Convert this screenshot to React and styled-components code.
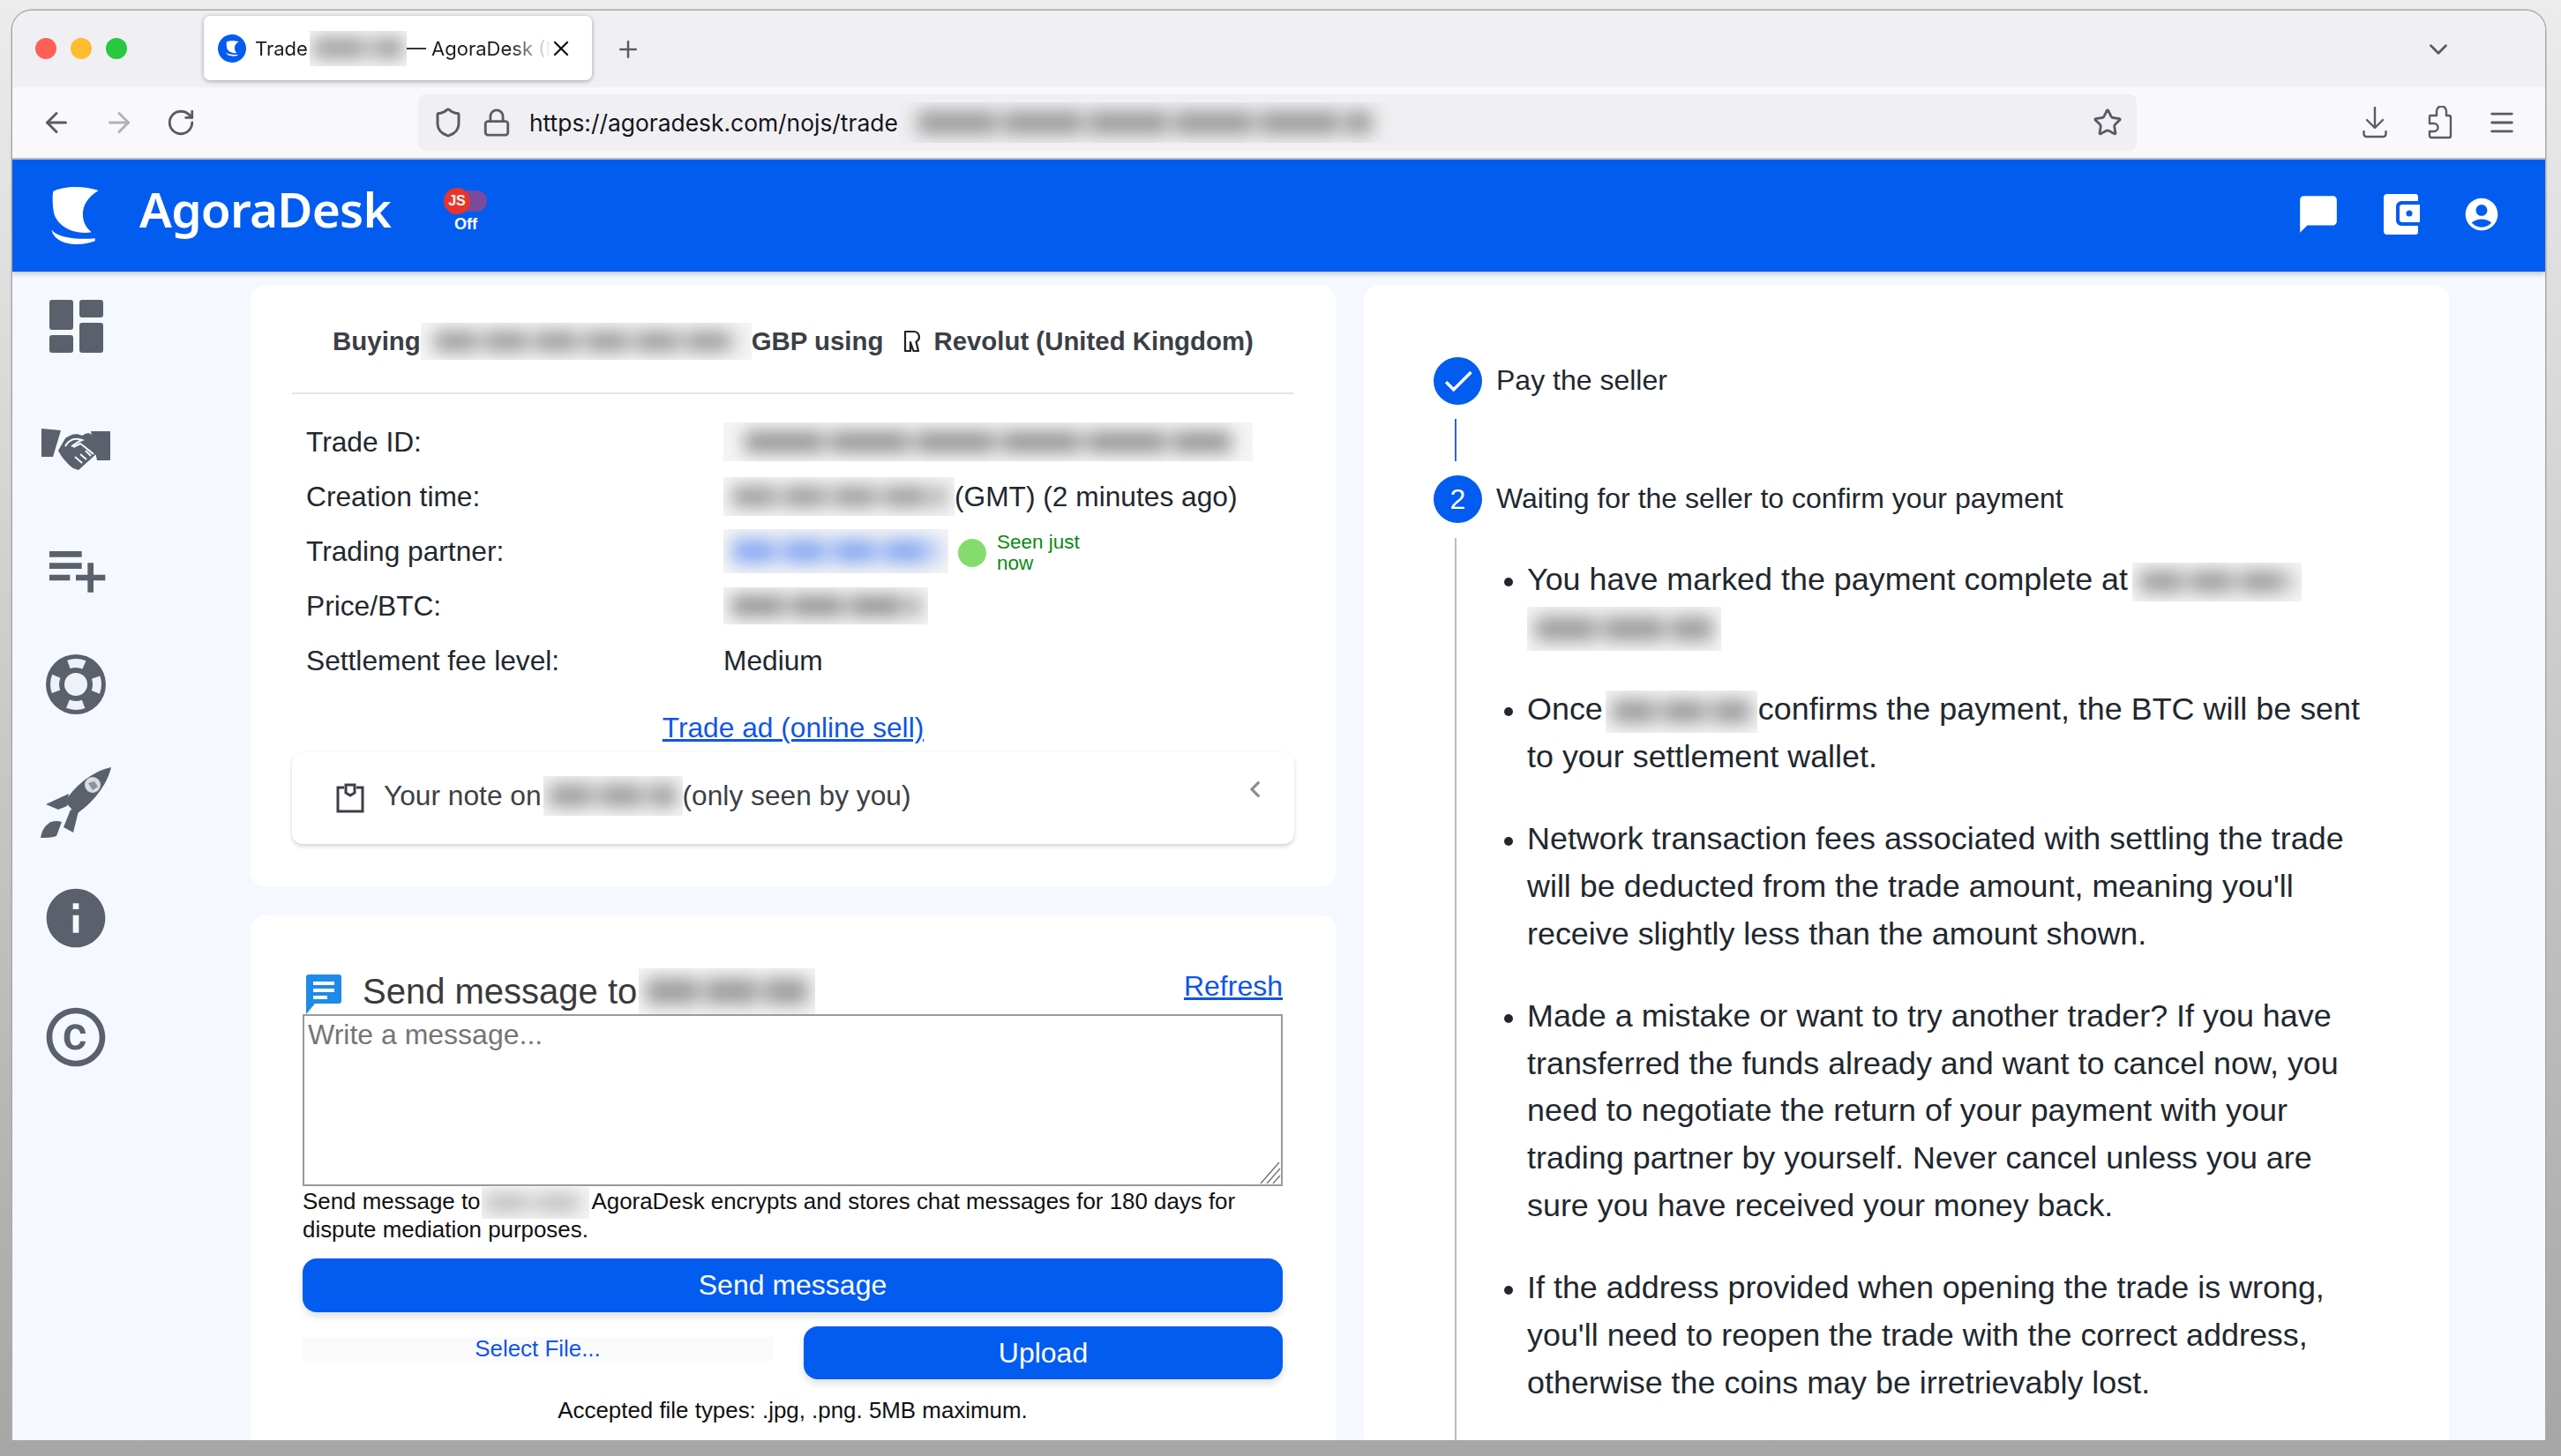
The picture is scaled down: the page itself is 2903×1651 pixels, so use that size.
import React from "react";
import styled, { createGlobalStyle } from "styled-components";
import { ArrowLeft, ArrowRight, RotateCw, Shield, Lock, Star, Menu, ChevronDown, Plus, X } from "lucide-react";
import { MdPlaylistAdd, MdInfo, MdCopyright, MdChatBubble, MdAccountCircle, MdChevronLeft, MdCheck } from "react-icons/md";

const Global = createGlobalStyle`
  html, body { margin: 0; padding: 0; background: #a8a8a8; }
  * { box-sizing: border-box; }
  body { font-family: "Liberation Sans", Arial, sans-serif; }
`;

const Page = styled.div`
  width: 2903px; height: 1651px; overflow: hidden;
  padding: 12px 18px 18px 14px;
  background: linear-gradient(180deg, #ececec 0%, #d0d0d0 40%, #a6a6a6 100%);
`;
const Win = styled.div`
  height: 100%; display: flex; flex-direction: column; overflow: hidden;
  border-radius: 22px 22px 0 0; background: #f5f8ff;
  box-shadow: 0 0 0 1.5px #a9a9a9;
`;
const TabBar = styled.div`
  height: 87px; flex: none; background: #f0f0f4; display: flex; align-items: center;
  padding: 0 0 0 26px;
`;
const Light = styled.span`
  width: 24px; height: 24px; border-radius: 50%; background: ${p => p.$c}; margin-right: 16px; flex: none;
  position: relative; top: -1px;
`;
const Tab = styled.div`
  width: 440px; height: 73px; margin-left: 71px; background: #fff; border-radius: 7px; flex: none;
  box-shadow: 0 1px 5px rgba(0,0,0,.35); display: flex; align-items: center; padding-left: 16px;
  font-family: "Inter", "Liberation Sans", sans-serif; font-size: 22px; color: #1c1b22; position: relative; top: -1px;
`;
const Favicon = styled.span`
  width: 32px; height: 32px; border-radius: 50%; background: #025cf0; display: flex; align-items: center; justify-content: center; flex: none; margin-right: 10px;
`;
const TabTitle = styled.span`
  display: flex; align-items: center; white-space: nowrap; width: 336px;
  -webkit-mask-image: linear-gradient(90deg, #000 86%, transparent 100%);
  mask-image: linear-gradient(90deg, #000 86%, transparent 100%);
`;
const TabClose = styled.span`display: flex; color: #15141a; margin-left: -3px;`;
const NewTab = styled.span`display: flex; color: #5b5b66; margin-left: 26px;`;
const TabMenu = styled.span`display: flex; color: #5b5b66; margin-left: auto; margin-right: 104px;`;

const Toolbar = styled.div`
  height: 82px; flex: none; background: #f9f9fb; border-bottom: 2px solid #c4c4c6; display: flex; align-items: center; color: #5b5b66;
  padding: 0 0 0 32px;
`;
const NavIcon = styled.span`
  display: flex; margin-right: 35px; color: ${p => p.$dim ? "#b1b1b6" : "#5b5b66"};
`;
const UrlBar = styled.div`
  width: 1948px; height: 64px; margin-left: 217px; background: #f0f0f4; border-radius: 8px; display: flex; align-items: center; padding-left: 16px; flex: none;
`;
const LockWrap = styled.span`display: flex; margin-left: 20px;`;
const UrlText = styled.span`
  font-family: "Inter", "Liberation Sans", sans-serif; font-size: 26.4px; color: #15141a; margin-left: 20px; white-space: nowrap; display: flex; align-items: center;
`;
const StarWrap = styled.span`display: flex; margin-left: auto; margin-right: 16px; color: #5b5b66;`;
const ToolRight = styled.div`display: flex; align-items: center; gap: 39px; margin-left: auto; margin-right: 32px;`;
const DownloadWrap = styled.span`display: flex; margin-right: 7px;`;

const Header = styled.header`
  height: 127px; flex: none; background: #025cf0; display: flex; align-items: center; padding-left: 43px; color: #fff;
  box-shadow: 0 2px 6px rgba(0,0,0,.25); position: relative; z-index: 2;
`;
const Brand = styled.span`
  font-family: "Noto Sans", sans-serif; font-weight: 600; font-size: 55px; letter-spacing: -.8px; margin-left: 45px; line-height: 1; position: relative; top: -8px;
`;
const Toggle = styled.div`
  margin-left: 53px; width: 64px; display: flex; flex-direction: column; align-items: center; position: relative; top: -5px;
`;
const Track = styled.div`
  width: 48px; height: 24px; border-radius: 12px; background: #7a4a9c; position: relative;
`;
const Knob = styled.div`
  position: absolute; left: -1px; top: -3px; width: 30px; height: 30px; border-radius: 50%; background: #e8352a; color: #fff; font-size: 16px; font-weight: 700; display: flex; align-items: center; justify-content: center;
`;
const OffLabel = styled.div`font-size: 18px; font-weight: 700; margin-top: 5px; line-height: 18px;`;
const HeadIcons = styled.div`display: flex; align-items: center; margin-left: auto; margin-right: 50px; gap: 48px; position: relative; top: -2px;`;

const Body = styled.div`flex: 1; min-height: 0; display: flex; overflow: hidden;`;
const Side = styled.nav`
  width: 270px; flex: none; display: flex; flex-direction: column; align-items: center; padding: 32px 126px 0 0; color: #5a616c;
`;
const SideSlot = styled.div`height: ${p => p.$h}px; flex: none; display: flex; justify-content: center; align-items: flex-start; width: 90px;`;

const Cols = styled.div`display: flex; padding-top: 16px; gap: 32px; align-items: flex-start;`;
const LeftCol = styled.div`width: 1230px; display: flex; flex-direction: column; gap: 33px;`;
const Card = styled.section`
  background: #fff; border-radius: 16px; padding: ${p => p.$pad};
  min-height: ${p => p.$h || 0}px;
`;
const RightCard = styled(Card)`width: 1230px; height: 1320px;`;
const TitleRow = styled.div`
  margin: 0 47px; height: 123px; border-bottom: 2px solid #e4e4e4; display: flex; align-items: center; justify-content: center;
  font-weight: 700; font-size: 29.4px; color: #3b3f45; white-space: nowrap; padding-top: 5px;
`;
const RevIcon = styled.svg`margin: 0 15px 0 22px; flex: none;`;
const Rows = styled.dl`
  margin: 23px 0 0; padding: 0 63px; display: grid; grid-template-columns: 473px 1fr; grid-auto-rows: 62px; color: #22272e; font-size: 31.7px;
`;
const Label = styled.dt`display: flex; align-items: center;`;
const Value = styled.dd`margin: 0; display: flex; align-items: center; white-space: nowrap;`;
const Seen = styled.span`
  display: block; width: 110px; color: #0a8a12; font-size: 22.5px; line-height: 24px; white-space: normal; margin-left: 12px; position: relative; top: 2px;
`;
const Dot = styled.span`width: 32px; height: 32px; border-radius: 50%; background: #84dc6c; margin-left: 11px; flex: none; position: relative; top: 2px;`;
const Center = styled.div`text-align: center; margin-top: 23px; height: 45px; line-height: 45px; font-size: 31.7px;`;
const Link = styled.a`color: #0f55e8; text-decoration: underline;`;
const Note = styled.div`
  margin: 5px 47px 0; height: 104px; border-radius: 12px; background: #fff; box-shadow: 0 3px 4px rgba(0,0,0,.15), 0 0 3px rgba(0,0,0,.05);
  display: flex; align-items: center; padding: 0 22px 0 50px; font-size: 31.7px; color: #3c4046; white-space: nowrap;
`;
const NoteText = styled.span`margin-left: 22px; display: flex; align-items: center; position: relative; top: -3px;`;
const NoteChevron = styled.span`display: flex; margin-left: auto; color: #8a8f96; position: relative; top: -10px; right: 3px;`;

const SendHead = styled.div`
  height: 46px; display: flex; align-items: center; color: #3a3a3a; font-size: 40px; white-space: nowrap; padding-left: 4px;
`;
const HeadText = styled.span`margin-left: 24px; display: flex; align-items: center; position: relative; top: -3px;`;
const Refresh = styled.a`margin-left: auto; color: #0f55e8; text-decoration: underline; font-size: 32px; position: relative; top: -9px;`;
const AreaWrap = styled.div`position: relative; height: 195px;`;
const Area = styled.textarea`
  display: block; width: 100%; height: 195px; border: 2px solid #9a9a9a; padding: 3px 4px; font: 32px "Liberation Sans", sans-serif; margin: 0; background: #fff;
  border-radius: 0; outline: none; color: #333; resize: none;
  &::placeholder { color: #757575; opacity: 1; }
`;
const Grip = styled.svg`position: absolute; right: 2px; bottom: 2px;`;
const Help = styled.div`font-size: 25.9px; line-height: 32px; color: #111; margin-top: 1px;`;
const Primary = styled.button`
  display: block; border: 0; border-radius: 16px; background: #025cf0; color: #fff; font: 32px "Liberation Sans", sans-serif; height: ${p => p.$h}px; width: ${p => p.$w || "100%"};
  box-shadow: 0 5px 8px rgba(0,0,0,.12); flex: none; margin-top: ${p => p.$mt || 0}px;
`;
const UploadRow = styled.div`display: flex; align-items: center; margin-top: 16px; justify-content: space-between;`;
const SelectFile = styled.div`
  width: 533px; height: 27px; background: #fafafa; color: #0f55e8; text-align: center; font-size: 25.9px; line-height: 27px; position: relative; top: -5px;
`;
const Accepted = styled.div`text-align: center; font-size: 25.9px; color: #111; margin-top: 20px; line-height: 30px;`;

const Step = styled.div`display: flex; align-items: center; height: 54px; font-size: 32px; color: #22272e; line-height: 50px;`;
const StepLabel = styled.span`position: relative; top: -1px;`;
const Bullet = styled.span`
  width: 55px; height: 54px; border-radius: 50%; background: #025cf0; color: #fff; display: flex; align-items: center; justify-content: center; font-size: 32px; flex: none; margin-right: 16px;
`;
const Rail = styled.div`
  width: 2px; height: ${p => p.$h}px; margin: ${p => p.$m}; background: ${p => p.$c};
`;
const RailWrap = styled.div`
  margin-left: 24px; border-left: 2px solid #bdbdbd; margin-top: 17px; padding-left: 56px; padding-top: 21px; min-height: 1100px;
`;
const List = styled.ul`margin: 0; padding: 0 0 0 24px; width: 980px; font-size: 35.9px; line-height: 53.7px; color: #22272e;`;
const Item = styled.li`margin-bottom: 39.7px; &::marker { font-size: 32px; }`;

const SmudgeBox = styled.span`
  display: inline-block; vertical-align: middle; width: ${p => p.$w}px; height: ${p => p.$h}px; background: rgba(238,238,238,.6); overflow: hidden; flex: none; position: relative;
  margin: ${p => p.$m || "0"};
`;
const SmudgeInk = styled.span`
  position: absolute; inset: 22% 4%; filter: blur(${p => p.$b || 10}px); opacity: ${p => p.$o || .55};
  background: repeating-linear-gradient(90deg, ${p => p.$c || "#555"} 0 ${p => p.$s || 40}px, transparent ${p => (p.$s || 40)}px ${p => (p.$s || 40) + 7}px);
`;
const Smudge = ({ w, h, c, m, o, s, b }) => (
  <SmudgeBox $w={w} $h={h} $m={m}><SmudgeInk $c={c} $o={o} $s={s} $b={b} /></SmudgeBox>
);

const Crescent = ({ size = 56, color = "#fff" }) => (
  <svg width={size} height={size * 1.2} viewBox="0 0 54 68" fill={color}>
    <path d="M2 6 C14 0 36 -1 54 5 C42 12 36 22 36 32 C36 42 40 48 46 53 C28 56 8 48 3 32 C1 22 1 12 2 6Z" />
    <path d="M0 50 C6 58 26 62 50 60 L50 63 C32 70 4 68 0 50Z" />
  </svg>
);

const Dashboard = () => (
  <svg width="61" height="60" viewBox="0 0 61 60" fill="#5a616c">
    <rect x="0" y="0" width="27" height="34" rx="3" />
    <rect x="34" y="0" width="27" height="20" rx="3" />
    <rect x="0" y="40" width="27" height="20" rx="3" />
    <rect x="34" y="26" width="27" height="34" rx="3" />
  </svg>
);

const Handshake = () => (
  <svg width="78" height="48" viewBox="0 0 78 48" fill="#5a616c">
    <path d="M0 1 L22 3 L13 33 L0 33Z" />
    <path d="M78 4 L78 37 L63 37 L56 4Z" />
    <path d="M19 26 L27 12 C34 7 40 6 46 9 C50 6 54 5 57 8 L63 29 L42 48 L36 46 C28 40 22 32 19 26Z" />
    <path d="M27 21 C32 12 40 12 46 14 C40 16 37 20 34 21 M36 22 L44 18 C50 22 55 27 59 30 M38 33 L46 40 M44 30 L51 36 M50 26 L56 32" fill="none" stroke="#f5f8ff" strokeWidth="2" />
  </svg>
);

const Lifebuoy = () => (
  <svg width="68" height="68" viewBox="0 0 68 68">
    <circle cx="34" cy="34" r="34" fill="#5a616c" />
    <circle cx="34" cy="34" r="24" fill="none" stroke="#eef1f6" strokeWidth="10" strokeDasharray="18 19.7" strokeDashoffset="9" />
    <circle cx="34" cy="34" r="13" fill="#eef1f6" />
  </svg>
);

const Rocket = () => (
  <svg width="80" height="80" viewBox="0 0 80 80" fill="#5a616c">
    <path d="M80 0 C76 18 62 38 42 52 L40 54 L34 46 L28 40 L30 36 C40 20 60 4 80 0Z" />
    <path d="M32 30 L6 42 L20 48 L30 44Z" />
    <path d="M43 50 L37 74 L26 68 L34 48Z" />
    <path d="M0 80 C2 66 12 58 24 62 L18 78 C12 80 6 80 0 80Z" />
    <circle cx="59" cy="20" r="9" fill="#d8dce2" />
    <path d="M54 18 L61 16 L65 22 L59 26Z" fill="#5a616c" opacity=".6" />
  </svg>
);

const Wallet = () => (
  <svg width="42" height="48" viewBox="0 0 42 48">
    <path d="M5 1 H37 a3 3 0 0 1 3 3 V9 H21 a6 6 0 0 0 -6 6 V31 a6 6 0 0 0 6 6 H40 V44 a3 3 0 0 1 -3 3 H5 a4 4 0 0 1 -4 -4 V5 a4 4 0 0 1 4 -4Z" fill="#fff" />
    <path d="M22 13 H42 V33 H22 a3 3 0 0 1 -3 -3 V16 a3 3 0 0 1 3 -3Z" fill="#fff" />
    <circle cx="30" cy="23" r="3.5" fill="#025cf0" />
  </svg>
);

const Download = () => (
  <svg width="28" height="36" viewBox="0 0 28 36" fill="none" stroke="#5b5b66" strokeWidth="2.4" strokeLinecap="round" strokeLinejoin="round">
    <path d="M14 1 V23 M5 15 L14 24 L23 15" />
    <path d="M1.5 28 V31 a3 3 0 0 0 3 3 H23.5 a3 3 0 0 0 3 -3 V28" />
  </svg>
);

const PuzzlePiece = () => (
  <svg width="28" height="38" viewBox="0 0 28 38" fill="none" stroke="#5b5b66" strokeWidth="2.4" strokeLinejoin="round">
    <path d="M3 11 H10 V6 a5.5 5.5 0 0 1 11 0 V11 H24 a2 2 0 0 1 2 2 V34 a2 2 0 0 1 -2 2 H4 a2 2 0 0 1 -2 -2 V29 H7 a4.5 4.5 0 0 0 0 -9 H2 V12 a1 1 0 0 1 1 -1Z" />
  </svg>
);

const Clip = () => (
  <svg width="32" height="34" viewBox="0 0 32 34" fill="none" stroke="#3c4046" strokeWidth="3">
    <path d="M9 5 H2 V32 H30 V5 H23" />
    <path d="M11 2 H21 V11 L16 14 L11 11Z" fill="#fff" />
  </svg>
);

const MsgIcon = () => (
  <svg width="40" height="46" viewBox="0 0 40 46">
    <path d="M3 1 H37 a3 3 0 0 1 3 3 V31 a3 3 0 0 1 -3 3 H10 L0 46 V4 a3 3 0 0 1 3 -3Z" fill="#1f8ae8" />
    <path d="M8 9 H32 V13 H8Z M8 17 H32 V21 H8Z M8 25 H24 V29 H8Z" fill="#fff" />
  </svg>
);

const App = () => (
  <>
    <Global />
    <Page>
      <Win>
        <TabBar>
          <Light $c="#ff5f57" /><Light $c="#febc2e" /><Light $c="#28c840" />
          <Tab>
            <Favicon><Crescent size={15} /></Favicon>
            <TabTitle>Trade<Smudge w={110} h={40} m="0 0 0 2px" s={60} />— AgoraDesk (N</TabTitle>
            <TabClose><X size={28} strokeWidth={2} /></TabClose>
          </Tab>
          <NewTab><Plus size={30} strokeWidth={2} /></NewTab>
          <TabMenu><ChevronDown size={34} strokeWidth={2} /></TabMenu>
        </TabBar>
        <Toolbar>
          <NavIcon><ArrowLeft size={36} strokeWidth={2} /></NavIcon>
          <NavIcon $dim><ArrowRight size={36} strokeWidth={2} /></NavIcon>
          <NavIcon><RotateCw size={34} strokeWidth={2} /></NavIcon>
          <UrlBar>
            <Shield size={36} strokeWidth={2} />
            <LockWrap><Lock size={34} strokeWidth={2} /></LockWrap>
            <UrlText>https://agoradesk.com/nojs/trade<Smudge w={560} h={46} s={90} /></UrlText>
            <StarWrap><Star size={34} strokeWidth={2} /></StarWrap>
          </UrlBar>
          <ToolRight>
            <DownloadWrap><Download /></DownloadWrap>
            <PuzzlePiece />
            <Menu size={34} strokeWidth={2} />
          </ToolRight>
        </Toolbar>
        <Header>
          <Crescent />
          <Brand>AgoraDesk</Brand>
          <Toggle>
            <Track><Knob>JS</Knob></Track>
            <OffLabel>Off</OffLabel>
          </Toggle>
          <HeadIcons>
            <MdChatBubble size={50} />
            <Wallet />
            <MdAccountCircle size={44} />
          </HeadIcons>
        </Header>
        <Body>
          <Side>
            <SideSlot $h={145}><Dashboard /></SideSlot>
            <SideSlot $h={120}><Handshake /></SideSlot>
            <SideSlot $h={137}><MdPlaylistAdd size={80} /></SideSlot>
            <SideSlot $h={128}><Lifebuoy /></SideSlot>
            <SideSlot $h={131}><Rocket /></SideSlot>
            <SideSlot $h={135}><MdInfo size={80} /></SideSlot>
            <SideSlot $h={100}><MdCopyright size={80} /></SideSlot>
          </Side>
          <Cols>
            <LeftCol>
              <Card $pad="0 0 47px" $h={681}>
                <TitleRow>
                  Buying<Smudge w={375} h={42} s={50} />GBP using
                  <RevIcon width="20" height="26" viewBox="0 0 20 26" fill="none" stroke="#222" strokeWidth="2.2" strokeLinejoin="round">
                    <path d="M3 2 H13 a6 6 0 0 1 2.5 11.4 L18 24 H12.5 L9 14 V24 H3Z" />
                  </RevIcon>
                  Revolut (United Kingdom)
                </TitleRow>
                <Rows>
                  <Label>Trade ID:</Label>
                  <Value><Smudge w={600} h={44} s={90} c="#444" /></Value>
                  <Label>Creation time:</Label>
                  <Value><Smudge w={262} h={44} s={50} c="#555" />(GMT) (2 minutes ago)</Value>
                  <Label>Trading partner:</Label>
                  <Value><Smudge w={255} h={50} s={50} c="#1f62f0" o={.5} /><Dot /><Seen>Seen just now</Seen></Value>
                  <Label>Price/BTC:</Label>
                  <Value><Smudge w={232} h={42} s={60} c="#444" /></Value>
                  <Label>Settlement fee level:</Label>
                  <Value>Medium</Value>
                </Rows>
                <Center><Link>Trade ad (online sell)</Link></Center>
                <Note>
                  <Clip />
                  <NoteText>Your note on<Smudge w={158} h={45} s={50} m="0 0 0 2px" />(only seen by you)</NoteText>
                  <NoteChevron><MdChevronLeft size={38} /></NoteChevron>
                </Note>
              </Card>
              <Card $pad="66px 60px 30px 59px">
                <SendHead>
                  <MsgIcon />
                  <HeadText>Send message to<Smudge w={200} h={52} s={60} m="0 0 0 2px" /></HeadText>
                  <Refresh>Refresh</Refresh>
                </SendHead>
                <AreaWrap>
                  <Area placeholder="Write a message..." />
                  <Grip width="24" height="26" viewBox="0 0 24 26" stroke="#777" strokeWidth="1.5">
                    <path d="M1 25 L22 1 M8 25 L23 8 M15 25 L23 16" />
                  </Grip>
                </AreaWrap>
                <Help>Send message to<Smudge w={122} h={36} s={50} o={.35} m="-4px 3px -4px 1px" />AgoraDesk encrypts and stores chat messages for 180 days for dispute mediation purposes.</Help>
                <Primary $h={61} $mt={17}>Send message</Primary>
                <UploadRow>
                  <SelectFile>Select File...</SelectFile>
                  <Primary $h={60} $w="543px">Upload</Primary>
                </UploadRow>
                <Accepted>Accepted file types: .jpg, .png. 5MB maximum.</Accepted>
              </Card>
            </LeftCol>
            <RightCard $pad="81px 0 0 79px">
              <Step><Bullet><MdCheck size={42} /></Bullet><StepLabel>Pay the seller</StepLabel></Step>
              <Rail $h={48} $m="16px 0 16px 24px" $c="#2f62d8" />
              <Step><Bullet>2</Bullet><StepLabel>Waiting for the seller to confirm your payment</StepLabel></Step>
              <RailWrap>
                <List>
                  <Item>You have marked the payment complete at<Smudge w={192} h={44} s={50} m="0 0 0 5px" /><br /><Smudge w={220} h={50} s={70} /></Item>
                  <Item>Once<Smudge w={172} h={48} s={50} m="0 1px 0 3px" />confirms the payment, the BTC will be sent to your settlement wallet.</Item>
                  <Item>Network transaction fees associated with settling the trade will be deducted from the trade amount, meaning you'll receive slightly less than the amount shown.</Item>
                  <Item>Made a mistake or want to try another trader? If you have transferred the funds already and want to cancel now, you need to negotiate the return of your payment with your trading partner by yourself. Never cancel unless you are sure you have received your money back.</Item>
                  <Item>If the address provided when opening the trade is wrong, you'll need to reopen the trade with the correct address, otherwise the coins may be irretrievably lost.</Item>
                </List>
              </RailWrap>
            </RightCard>
          </Cols>
        </Body>
      </Win>
    </Page>
  </>
);

export default App;
